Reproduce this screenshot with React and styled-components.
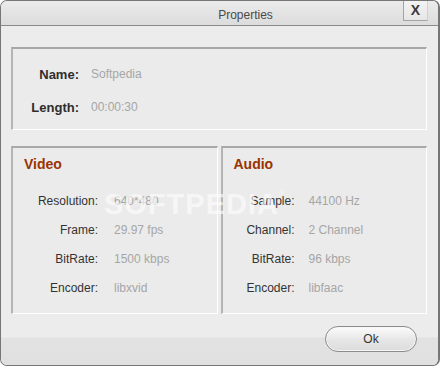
import React from "react";
import styled, { createGlobalStyle } from "styled-components";

const GlobalStyle = createGlobalStyle`
  html, body {
    margin: 0;
    padding: 0;
    background: #ffffff;
  }
  * {
    box-sizing: border-box;
  }
`;

const Window = styled.div`
  position: relative;
  width: 440px;
  height: 366px;
  border: 1px solid #767676;
  border-right-width: 2px;
  border-radius: 7px;
  background: #ececec;
  display: flex;
  flex-direction: column;
  overflow: hidden;
  font-family: "Liberation Sans", Arial, sans-serif;
`;

const TitleBar = styled.div`
  height: 25px;
  flex: none;
  display: flex;
  align-items: center;
  justify-content: center;
  padding-left: 52px;
  background: linear-gradient(#ebebeb, #dcdcdc);
  border-bottom: 1px solid #8a8a8a;
  position: relative;
`;

const Title = styled.span`
  font-size: 12px;
  color: #4a4a4a;
  margin-top: 4px;
`;

const CloseButton = styled.div`
  position: absolute;
  right: 10px;
  top: -1px;
  width: 25px;
  height: 21px;
  display: flex;
  align-items: center;
  justify-content: center;
  background: linear-gradient(#f4f4f4, #e6e6e6);
  border: 1px solid #a4a4a4;
  border-top: none;
  border-right-color: #d0d0d0;
  font-size: 14px;
  font-weight: bold;
  color: #3a3a3a;
`;

const Body = styled.div`
  flex: 1;
  display: flex;
  flex-direction: column;
  padding: 21px 11px 0 10px;
`;

const InfoPanel = styled.div`
  height: 83px;
  display: grid;
  grid-template-columns: 66px 1fr;
  column-gap: 12px;
  align-content: start;
  padding-top: 9px;
  border: 1px solid #ffffff;
  border-top: 2px solid #a8a8a8;
  border-left: 2px solid #b4b4b4;
  background: #ebebeb;
`;

const Columns = styled.div`
  display: flex;
  gap: 3px;
  margin-top: 16px;
`;

const MediaPanel = styled.div`
  width: 207px;
  height: 168px;
  padding: 7px 0 0 11px;
  border: 1px solid #ffffff;
  border-top: 2px solid #a8a8a8;
  border-left: 2px solid #b4b4b4;
  background: #ebebeb;
`;

const Heading = styled.div`
  font-size: 14px;
  font-weight: bold;
  color: #993300;
  line-height: 18px;
`;

const Rows = styled.div`
  display: grid;
  grid-template-columns: ${p => p.$labelWidth}px 1fr;
  column-gap: ${p => p.$gap}px;
  margin-top: 14px;
  margin-left: -11px;
`;

const Label = styled.div`
  text-align: right;
  font-size: ${p => (p.$bold ? 13 : 12)}px;
  font-weight: ${p => (p.$bold ? "bold" : "normal")};
  color: ${p => (p.$bold ? "#2e2e2e" : "#333333")};
  line-height: ${p => p.$line}px;
`;

const Value = styled.div`
  font-size: 12px;
  color: #a6a6a6;
  line-height: ${p => p.$line}px;
`;

const Footer = styled.div`
  flex: 1;
  display: flex;
  justify-content: flex-end;
  align-items: flex-start;
  padding: 12px 21px 0 0;
  background: linear-gradient(#ececec 0, #ececec 23px, #e2e2e2 24px, #e0e0e0 100%);
`;

const OkButton = styled.button`
  width: 92px;
  height: 26px;
  border-radius: 13px;
  border: 1px solid #8c8c8c;
  background: linear-gradient(#fbfbfb, #e6e6e6 55%, #dcdcdc);
  box-shadow: inset 0 0 0 1px #f6f6f6;
  font-family: "Liberation Sans", Arial, sans-serif;
  font-size: 12px;
  color: #333;
  padding: 0;
`;

const Watermark = styled.div`
  position: absolute;
  left: 103px;
  top: 187px;
  font-size: 29px;
  font-weight: bold;
  letter-spacing: 1px;
  color: rgba(255, 255, 255, 0.6);
  pointer-events: none;
  & sup {
    font-size: 8px;
    font-weight: normal;
    vertical-align: top;
  }
`;

const video = [
  ["Resolution:", "640*480"],
  ["Frame:", "29.97 fps"],
  ["BitRate:", "1500 kbps"],
  ["Encoder:", "libxvid"],
];

const audio = [
  ["Sample:", "44100 Hz"],
  ["Channel:", "2 Channel"],
  ["BitRate:", "96 kbps"],
  ["Encoder:", "libfaac"],
];

function Media({ title, rows, labelWidth, gap }) {
  return (
    <MediaPanel>
      <Heading>{title}</Heading>
      <Rows $labelWidth={labelWidth} $gap={gap}>
        {rows.map(([k, v]) => (
          <React.Fragment key={k}>
            <Label $line={29}>{k}</Label>
            <Value $line={29}>{v}</Value>
          </React.Fragment>
        ))}
      </Rows>
    </MediaPanel>
  );
}

export default function App() {
  return (
    <>
      <GlobalStyle />
      <Window>
        <TitleBar>
          <Title>Properties</Title>
          <CloseButton>X</CloseButton>
        </TitleBar>
        <Body>
          <InfoPanel>
            <Label $bold $line={33}>Name:</Label>
            <Value $line={33}>Softpedia</Value>
            <Label $bold $line={33}>Length:</Label>
            <Value $line={33}>00:00:30</Value>
          </InfoPanel>
          <Columns>
            <Media title="Video" rows={video} labelWidth={85} gap={16} />
            <Media title="Audio" rows={audio} labelWidth={72} gap={14} />
          </Columns>
        </Body>
        <Footer>
          <OkButton>Ok</OkButton>
        </Footer>
        <Watermark>
          SOFTPEDIA<sup>®</sup>
        </Watermark>
      </Window>
    </>
  );
}
